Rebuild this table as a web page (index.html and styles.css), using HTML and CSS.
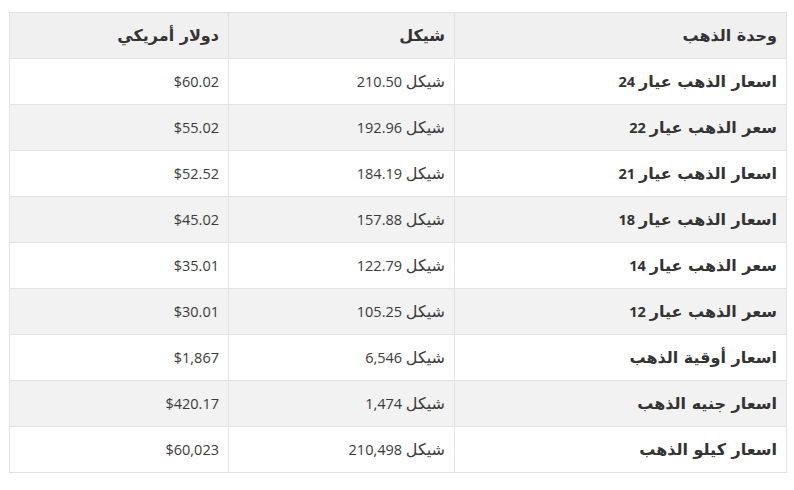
FILE: index.html
```html
<!DOCTYPE html>
<html lang="ar" dir="rtl">
<head>
<meta charset="utf-8">
<link rel="stylesheet" href="styles.css">
</head>
<body>
<div class="wrap">
<table class="prices">
<thead>
<tr><th class="c1"><span class="ar">وحدة الذهب</span></th><th class="c2"><span class="ar">شيكل</span></th><th class="c3"><span class="ar">دولار أمريكي</span></th></tr>
</thead>
<tbody>
<tr><td class="unit"><span class="ar">اسعار الذهب عيار</span> 24</td><td><span dir="ltr">210.50 <span class="ar">شيكل</span></span></td><td>$60.02</td></tr>
<tr><td class="unit"><span class="ar">سعر الذهب عيار</span> 22</td><td><span dir="ltr">192.96 <span class="ar">شيكل</span></span></td><td>$55.02</td></tr>
<tr><td class="unit"><span class="ar">اسعار الذهب عيار</span> 21</td><td><span dir="ltr">184.19 <span class="ar">شيكل</span></span></td><td>$52.52</td></tr>
<tr><td class="unit"><span class="ar">اسعار الذهب عيار</span> 18</td><td><span dir="ltr">157.88 <span class="ar">شيكل</span></span></td><td>$45.02</td></tr>
<tr><td class="unit"><span class="ar">سعر الذهب عيار</span> 14</td><td><span dir="ltr">122.79 <span class="ar">شيكل</span></span></td><td>$35.01</td></tr>
<tr><td class="unit"><span class="ar">سعر الذهب عيار</span> 12</td><td><span dir="ltr">105.25 <span class="ar">شيكل</span></span></td><td>$30.01</td></tr>
<tr><td class="unit"><span class="ar">اسعار أوقية الذهب</span></td><td><span dir="ltr">6,546 <span class="ar">شيكل</span></span></td><td>$1,867</td></tr>
<tr><td class="unit"><span class="ar">اسعار جنيه الذهب</span></td><td><span dir="ltr">1,474 <span class="ar">شيكل</span></span></td><td>$420.17</td></tr>
<tr><td class="unit"><span class="ar">اسعار كيلو الذهب</span></td><td><span dir="ltr">210,498 <span class="ar">شيكل</span></span></td><td>$60,023</td></tr>
</tbody>
</table>
</div>
</body>
</html>
```

FILE: styles.css
```css
html, body {
  margin: 0;
  padding: 0;
  background: #ffffff;
}
.wrap {
  padding: 12px 7px 0 9px;
}
.prices {
  width: 778px;
  border-collapse: collapse;
  font-family: "Open Sans", "DejaVu Sans", sans-serif;
  font-size: 14.5px;
  color: #3a3a3a;
  table-layout: fixed;
}
.prices .ar {
  font-family: "DejaVu Sans", sans-serif;
  font-size: 16px;
}
.prices th, .prices td {
  border: 1px solid #e2e2e2;
  height: 45px;
  padding: 0 9px;
  text-align: right;
  vertical-align: middle;
}
.prices th {
  background: #f0f0f0;
  font-weight: bold;
  color: #333;
}
.prices .c1 { width: 313px; }
.prices .c2 { width: 207px; }
.prices td.unit {
  font-weight: bold;
  color: #333;
}
.prices tbody tr:nth-child(even) td {
  background: #f2f2f2;
}
```
